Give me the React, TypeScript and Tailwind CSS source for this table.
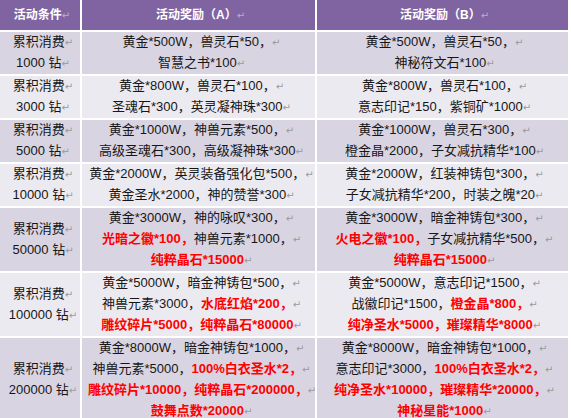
type Line = string[];

type Row = {
  cond: string;
  a: Line[];
  b: Line[];
  h: string;
  bg: string;
};

// "!" prefix marks red bold text
const rows: Row[] = [
  {
    cond: "1000 钻",
    h: "h-[43px]",
    bg: "bg-[#d8d4e2]",
    a: [["黄金*500W，兽灵石*50，"], ["智慧之书*100"]],
    b: [["黄金*500W，兽灵石*50，"], ["神秘符文石*100"]],
  },
  {
    cond: "3000 钻",
    h: "h-[44px]",
    bg: "bg-[#eceaf1]",
    a: [["黄金*800W，兽灵石*100，"], ["圣魂石*300，英灵凝神珠*300"]],
    b: [["黄金*800W，兽灵石*100，"], ["意志印记*150，紫铜矿*1000"]],
  },
  {
    cond: "5000 钻",
    h: "h-[42px]",
    bg: "bg-[#d8d4e2]",
    a: [["黄金*1000W，神兽元素*500，"], ["高级圣魂石*300，高级凝神珠*300"]],
    b: [["黄金*1000W，兽灵石*300，"], ["橙金晶*2000，子女减抗精华*100"]],
  },
  {
    cond: "10000 钻",
    h: "h-[43px]",
    bg: "bg-[#eceaf1]",
    a: [["黄金*2000W，英灵装备强化包*500，"], ["黄金圣水*2000，神的赞誉*300"]],
    b: [["黄金*2000W，红装神铸包*300，"], ["子女减抗精华*200，时装之魄*20"]],
  },
  {
    cond: "50000 钻",
    h: "h-[65px]",
    bg: "bg-[#d8d4e2]",
    a: [
      ["黄金*3000W，神的咏叹*300，"],
      ["!光暗之徽*100，", "神兽元素*1000，"],
      ["!纯粹晶石*15000"],
    ],
    b: [
      ["黄金*3000W，暗金神铸包*300，"],
      ["!火电之徽*100，", "子女减抗精华*500，"],
      ["!纯粹晶石*15000"],
    ],
  },
  {
    cond: "100000 钻",
    h: "h-[65px]",
    bg: "bg-[#eceaf1]",
    a: [
      ["黄金*5000W，暗金神铸包*500，"],
      ["神兽元素*3000，", "!水底红焰*200，"],
      ["!雕纹碎片*5000，纯粹晶石*80000"],
    ],
    b: [
      ["黄金*5000W，意志印记*1500，"],
      ["战徽印记*1500，", "!橙金晶*800，"],
      ["!纯净圣水*5000，璀璨精华*8000"],
    ],
  },
  {
    cond: "200000 钻",
    h: "h-[85px]",
    bg: "bg-[#d8d4e2]",
    a: [
      ["黄金*8000W，暗金神铸包*1000，"],
      ["神兽元素*5000，", "!100%白衣圣水*2，"],
      ["!雕纹碎片*10000，纯粹晶石*200000，"],
      ["!鼓舞点数*20000"],
    ],
    b: [
      ["黄金*8000W，暗金神铸包*1000，"],
      ["意志印记*3000，", "!100%白衣圣水*2，"],
      ["!纯净圣水*10000，璀璨精华*20000，"],
      ["!神秘星能*1000"],
    ],
  },
];

function Mark({ light }: { light?: boolean }) {
  return (
    <span
      className={`font-['DejaVu_Sans',sans-serif] text-[10px] font-normal ${
        light ? "text-[#b9aed0]" : "text-[#9a9a9a]"
      }`}
    >
      ↵
    </span>
  );
}

function Lines({ lines }: { lines: Line[] }) {
  return (
    <>
      {lines.map((line, i) => (
        <div key={i} className="whitespace-nowrap">
          {line.map((seg, j) =>
            seg.startsWith("!") ? (
              <span key={j} className="font-bold text-[#ff0000]">
                {seg.slice(1)}
              </span>
            ) : (
              <span key={j}>{seg}</span>
            )
          )}
          <Mark />
        </div>
      ))}
    </>
  );
}

export default function App() {
  return (
    <div className="w-[571px] h-[418px] bg-white overflow-hidden font-['Liberation_Sans','Noto_Sans_CJK_SC',sans-serif] text-[13px] leading-[20px] text-[#161616]">
      <table className="w-[568px] table-fixed border-collapse">
        <colgroup>
          <col className="w-[81px]" />
          <col className="w-[235px]" />
          <col className="w-[252px]" />
        </colgroup>
        <thead>
          <tr className="h-[31px] bg-[#8064a2] text-white text-[12px] font-bold">
            <th className="border-2 border-t-0 border-l-0 border-white pl-[4px]">
              活动条件<Mark light />
            </th>
            <th className="border-2 border-t-0 border-white pl-[4px]">
              活动奖励（A）<Mark light />
            </th>
            <th className="border-2 border-t-0 border-r-0 border-white pl-[4px]">
              活动奖励（B）<Mark light />
            </th>
          </tr>
        </thead>
        <tbody>
          {rows.map((r) => (
            <tr key={r.cond} className={`${r.h} ${r.bg}`}>
              <td className="border-2 border-l-0 border-white text-center align-middle py-0 pl-[6px] pr-0">
                <div>
                  累积消费<Mark />
                </div>
                <div>
                  {r.cond}
                  <Mark />
                </div>
              </td>
              <td className="border-2 border-white text-center align-middle py-0 pl-[6px] pr-0 overflow-hidden">
                <Lines lines={r.a} />
              </td>
              <td className="border-2 border-r-0 border-white text-center align-middle py-0 pl-[4px] pr-0 overflow-hidden">
                <Lines lines={r.b} />
              </td>
            </tr>
          ))}
        </tbody>
      </table>
    </div>
  );
}
